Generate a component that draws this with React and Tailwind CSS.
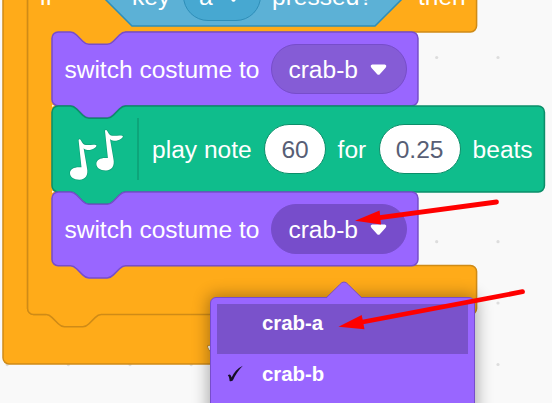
const NOTCH_RIGHT = 'c2 0 3 1 4 2l4 4c1 1 2 2 4 2h12c2 0 3 -1 4 -2l4 -4c1 -1 2 -2 4 -2';
const NOTCH_LEFT = 'c-2 0 -3 1 -4 2l-4 4c-1 1 -2 2 -4 2h-12c-2 0 -3 -1 -4 -2l-4 -4c-1 -1 -2 -2 -4 -2';

// Workspace zoom: block units to pixels.
const SCALE = 1.535;

function stackPath(w, h) {
  return `M0 4a4 4 0 0 1 4 -4h8${NOTCH_RIGHT}H${w - 4}a4 4 0 0 1 4 4V${h - 4}a4 4 0 0 1 -4 4H48${NOTCH_LEFT}H4a4 4 0 0 1 -4 -4z`;
}

function StackBlock({ className, shape, width, height, children }) {
  return (
    <div className={`absolute left-[52.1px] ${className}`}>
      <svg className={`absolute inset-0 overflow-visible ${shape}`} width="1" height="1">
        <path transform={`scale(${SCALE})`} d={stackPath(width, height)} strokeWidth="1" />
      </svg>
      <div className="relative flex h-full items-center whitespace-nowrap">{children}</div>
    </div>
  );
}

function Caret({ className = '' }) {
  return (
    <svg className={`shrink-0 ${className}`} width="17" height="12" viewBox="0 0 17 12">
      <path d="M2.2 .6H14.8Q16.8 .9 16.2 2.8Q16 3.4 15.4 4L10 9.9Q8.5 11.6 7 9.9L1.6 4Q1 3.4 .8 2.8Q.2 .9 2.2 .6Z" fill="#fff" />
    </svg>
  );
}

function CostumeBlock({ className, field }) {
  return (
    <StackBlock
      className={`h-[73.7px] w-[366px] ${className}`}
      shape="fill-[#9966ff] stroke-[#774dcb]"
      width={238.4}
      height={48}
    >
      <span className="ml-[12.3px] w-[207px] pt-[2px]">switch costume to</span>
      <div className={`flex h-[50px] w-[135.5px] items-center rounded-full border-[1.5px] border-[#774dcb] pl-[16px] ${field}`}>
        <span className="w-[81.5px] pt-[2px]">crab-b</span>
        <Caret className="mt-[3px]" />
      </div>
    </StackBlock>
  );
}

function Note() {
  return (
    <path d="M79.6 139.2C81.6 139.4 81.4 144.6 86 144.9C90 145.3 93.4 144 96.4 145.2C97 147 92.5 150.3 87.5 150C86 150 84.6 149.2 83.6 148.3L87 168C88.5 175 85.5 179.7 79.5 179.7C73.5 179.7 69.8 176.5 70 172.7C70.3 168.7 75 166.5 81.5 167.3L78.6 140.2Q78.7 139.1 79.6 139.2Z" />
  );
}

function MenuItem({ label, checked, className }) {
  return (
    <div className={`flex h-[50px] ${className}`}>
      <span className="flex w-[45px] pt-[10px] pl-[10px]">
        {checked && (
          <svg width="17" height="18" viewBox="0 0 17 18">
            <path d="M.8 10.5C2.3 9 3.8 9.2 4.6 12.6C6.8 7.6 10.2 3.5 15.8 .8C11.3 5.2 8 10.5 5.8 15.5C4.6 16.4 3.2 16.6 2.6 15.9C2.5 13.5 2 11.2 .8 10.5Z" fill="#160f26" />
          </svg>
        )}
      </span>
      <span className="pt-[7px] text-[20.4px] leading-[24px] font-bold">{label}</span>
    </div>
  );
}

const DOTS = [
  [436.7, 57.5], [498, 57.5], [436.7, 241.7], [498, 241.7], [498, 303], [498, 364.5],
  [7.2, 364.6], [68.4, 364.6], [130, 364.6], [191.2, 364.6],
];

export default function App() {
  return (
    <div className="relative h-[403px] w-[552px] overflow-hidden bg-[#f9f9f9] font-['Liberation_Sans',Arial,sans-serif] text-[24.56px] leading-[28px] text-white">
      {/* workspace grid and the surrounding C-shaped blocks */}
      <svg className="absolute inset-0" width="552" height="403">
        {DOTS.map(([x, y]) => (
          <circle key={`${x}-${y}`} cx={x} cy={y} r="1.6" fill="#ddd" />
        ))}
        <g fill="#ffab19" stroke="#cf8b17" strokeWidth="1.5">
          <path d="M3 -20V357.8A6.1 6.1 0 0 0 9.1 363.9H460V300H40V-20Z" />
          <path d="M27.6 -40V308.4A6.1 6.1 0 0 0 33.7 314.5H46" fill="none" />
          <path
            transform={`translate(27.6 0) scale(${SCALE})`}
            strokeWidth="1"
            d={`M0 -20V200.9a4 4 0 0 0 4 4h8${NOTCH_RIGHT}H288.5a4 4 0 0 0 4 -4V176.9a4 4 0 0 0 -4 -4H64V20.8H288.5a4 4 0 0 0 4 -4V-20z`}
          />
        </g>
        <path d="M50 28H90V268H50Z" fill="#ffab19" />
        <path d="M101.3 -4.7L132 26.1H375L405.7 -4.7L375 -35H132Z" fill="#5cb1d6" stroke="#2e8eb8" strokeWidth="1.5" />
        <path d="M52.1 104.5L54.3 105.7L52.1 107ZM52.1 190.5L54.3 191.7L52.1 193Z" fill="#fff" />
        <path d="M207.5 345.5Q211 344.5 214 346V355Q207 349.5 207.5 345.5Z" fill="#fff" stroke="#cf8b17" />
      </svg>

      {/* header labels of the condition block, scrolled partly out of view */}
      <div className="absolute top-[-41px] left-[40px] flex h-[74px] items-center whitespace-nowrap">
        <span className="w-[92px] pt-[2px]">if</span>
        <span className="w-[51px] pt-[2px]">key</span>
        <div className="flex h-[50px] w-[78px] items-center rounded-full border-[1.5px] border-[#2e8eb8] bg-[#47a8d1] pl-[15px]">
          <span className="w-[26px] pt-[2px]">a</span>
          <Caret className="mt-[2px]" />
        </div>
        <span className="ml-[11px] w-[146px] pt-[2px]">pressed?</span>
        <span className="pt-[2px]">then</span>
      </div>

      <CostumeBlock className="top-[32px]" field="bg-[#855cd6]" />

      <StackBlock
        className="top-[105.7px] h-[86px] w-[493px]"
        shape="fill-[#0fbd8c] stroke-[#0b8e69]"
        width={320.8}
        height={56}
      >
        <svg className="mt-[10px] ml-[13px] shrink-0" width="62" height="56" viewBox="65 126 62 56">
          <g fill="#fff" stroke="#0b8e69" strokeOpacity=".55" strokeWidth="1.4" paintOrder="stroke">
            <Note />
            <g transform="translate(26.4 -9.2)"><Note /></g>
          </g>
        </svg>
        <div className="ml-[10px] h-[62px] w-[1.5px] bg-[#0da57a]" />
        <span className="ml-[13.5px] w-[112px] pt-[2px]">play note</span>
        <span className="flex h-[50px] w-[62px] items-center justify-center rounded-full border-[1.5px] border-[#0b8e69] bg-white pt-[2px] text-[#575e75]">60</span>
        <span className="ml-[11.5px] w-[41px] pt-[2px]">for</span>
        <span className="flex h-[50px] w-[82px] items-center justify-center rounded-full border-[1.5px] border-[#0b8e69] bg-white pt-[2px] text-[#575e75]">0.25</span>
        <span className="ml-[12px] pt-[2px]">beats</span>
      </StackBlock>

      <CostumeBlock className="top-[191.7px]" field="bg-[#774dcb]" />

      {/* costume drop-down */}
      <div className="absolute top-[297px] left-[210px] h-[140px] w-[265px] rounded-[6px] border border-[#774dcb] bg-[#9966ff] px-[6px] py-[6px] shadow-[0_0_16px_2px_rgba(0,0,0,0.32)]">
        <svg className="absolute top-[-17px] left-[114px]" width="40" height="19">
          <path d="M1 17.5L14.5 4Q19 -1.8 23.5 4L37 17.5V19H1Z" fill="#9966ff" />
          <path d="M1 17L14.5 3.8Q19 -1.8 23.5 3.8L37 17" fill="none" stroke="#774dcb" />
        </svg>
        <MenuItem label="crab-a" className="bg-[#7a52cb]" />
        <MenuItem label="crab-b" checked className="mt-px" />
      </div>

      {/* pointer arrows */}
      <svg className="absolute inset-0" width="552" height="403">
        <g fill="#f00" stroke="#f00" strokeWidth="4.8" strokeLinecap="round">
          <path d="M496.5 202L376 218.2" />
          <path d="M355 220.8L379.6 210.5L381 224.5Z" stroke="none" />
          <path d="M522.5 291.7L360 322.5" />
          <path d="M338.5 326.7L361.7 315L364.5 329.2Z" stroke="none" />
        </g>
      </svg>
    </div>
  );
}
